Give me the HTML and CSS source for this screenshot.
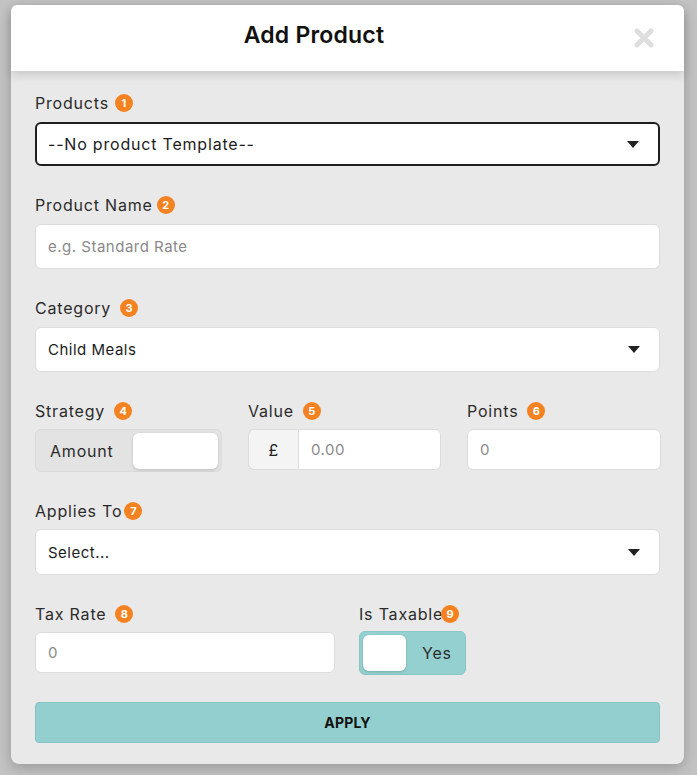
FILE: index.html
```html
<!DOCTYPE html>
<html lang="en">
<head>
    <meta charset="UTF-8">
    <title>Add Product</title>
    <link rel="stylesheet" href="styles.css">
</head>
<body>
    <div class="backdrop">
        <div class="modal">
            <!-- header -->
            <div class="modal-head">
                <h2 class="modal-title">Add Product</h2>
                <button class="close-btn" aria-label="Close">
                    <svg width="20" height="20" viewBox="0 0 20 20"><path d="M3 3 L17 17 M17 3 L3 17" stroke="#dedede" stroke-width="5" stroke-linecap="round"/></svg>
                </button>
            </div>

            <div class="modal-body">
                <div class="field">
                    <label class="label">Products <span class="badge">1</span></label>
                    <div class="select focused">
                        <span>--No product Template--</span>
                        <svg class="caret" width="12" height="7" viewBox="0 0 12 7"><path d="M0 0 H12 L6 7 Z" fill="#222"/></svg>
                    </div>
                </div>

                <div class="field">
                    <label class="label">Product Name <span class="badge tight">2</span></label>
                    <input class="input" type="text" placeholder="e.g. Standard Rate">
                </div>

                <div class="field">
                    <label class="label">Category <span class="badge wide">3</span></label>
                    <div class="select">
                        <span>Child Meals</span>
                        <svg class="caret" width="12" height="7" viewBox="0 0 12 7"><path d="M0 0 H12 L6 7 Z" fill="#222"/></svg>
                    </div>
                </div>

                <div class="field row-3 close-label">
                    <div>
                        <label class="label">Strategy <span class="badge wide">4</span></label>
                        <div class="switch strategy">
                            <span class="switch-text">Amount</span>
                            <span class="knob"></span>
                        </div>
                    </div>
                    <div>
                        <label class="label">Value <span class="badge wide">5</span></label>
                        <div class="input-group">
                            <span class="addon">£</span>
                            <input class="input small" type="text" placeholder="0.00">
                        </div>
                    </div>
                    <div>
                        <label class="label">Points <span class="badge wide">6</span></label>
                        <input class="input small" type="text" placeholder="0">
                    </div>
                </div>

                <div class="field close-label">
                    <label class="label">Applies To<span class="badge snug">7</span></label>
                    <div class="select tall">
                        <span>Select...</span>
                        <svg class="caret" width="12" height="7" viewBox="0 0 12 7"><path d="M0 0 H12 L6 7 Z" fill="#222"/></svg>
                    </div>
                </div>

                <div class="field row-tax close-label">
                    <div class="tax-col">
                        <label class="label">Tax Rate <span class="badge wide">8</span></label>
                        <input class="input small" type="text" placeholder="0">
                    </div>
                    <div class="taxable-col">
                        <label class="label">Is Taxable<span class="badge flush">9</span></label>
                        <div class="switch taxable">
                            <span class="knob"></span>
                            <span class="switch-text">Yes</span>
                        </div>
                    </div>
                </div>

                <button class="apply-btn">APPLY</button>
            </div>
        </div>
    </div>
</body>
</html>
```

FILE: styles.css
```css
html, body {
    margin: 0; padding: 0;
    background: #c3c3c3;
    font-family: 'Inter', 'Open Sans', sans-serif;
}
.backdrop {
    padding: 5px 13px 10px 11px;
    min-height: 775px; box-sizing: border-box;
}
.modal {
    width: 673px;
    background: #e9e9e9;
    border-radius: 8px;
    box-shadow: 0 4px 14px rgba(0,0,0,0.22);
}
/* ----------- header ----------- */
.modal-head {
    height: 66px;
    padding-right: 67px; box-sizing: border-box;
    background: #fff;
    border-radius: 6px 6px 0 0;
    box-shadow: 0 4px 10px rgba(0,0,0,0.14);
    display: flex; align-items: center; justify-content: center;
    position: relative;
}
.modal-title {
    margin: 0 0 6px 0;
    font-size: 23px; font-weight: 600; color: #111;
    letter-spacing: 0.2px;
}
.close-btn {
    position: absolute; right: 30px; top: 23px;
    background: none; border: 0; padding: 0; cursor: pointer;
}
/* ----------- body ----------- */
.modal-body {
    padding: 21px 24px 21px 24px;
}
.field { margin-bottom: 28px; }
.label {
    display: flex; align-items: center;
    height: 22px; margin-bottom: 8px;
    font-size: 16px; color: #2b2b2b;
    letter-spacing: 0.8px;
}
.close-label .label { margin-bottom: 7px; }
.badge {
    display: inline-flex; align-items: center; justify-content: center;
    width: 18px; height: 18px; border-radius: 50%;
    margin-left: 6px;
    background: #f58220; color: #fff;
    font-size: 11px; font-weight: 700; letter-spacing: 0;
}
.badge.tight { margin-left: 4px; }
.badge.wide { margin-left: 9px; }
.badge.snug { margin-left: 2px; }
.badge.flush { margin-left: -2px; }

.select, .input {
    box-sizing: border-box; width: 100%;
    height: 45px;
    background: #fff;
    border: 1px solid #dcdcdc;
    border-radius: 6px;
    font-family: inherit; font-size: 15px; color: #1c1c1c;
    letter-spacing: 0.5px;
}
.select {
    display: flex; align-items: center; justify-content: space-between;
    padding: 0 19px 0 12px;
}
.select.focused {
    height: 44px;
    border: 2px solid #1e1e1e;
    padding-left: 11px; font-size: 16px;
    letter-spacing: 0.8px;
}
.select.tall { height: 46px; }
.caret { flex: none; }
.input {
    padding: 0 12px; outline: none;
}
.input::placeholder { color: #8a8a8a; }
.input.small { height: 41px; }

/* three columns: strategy / value / points */
.row-3 {
    display: grid; grid-template-columns: 187px 193px 194px;
    column-gap: 26px;
}
.input-group { display: flex; }
.addon {
    flex: none;
    width: 50px; height: 41px; box-sizing: border-box;
    display: flex; align-items: center; justify-content: center;
    background: #f4f4f4;
    border: 1px solid #dcdcdc; border-right: 0;
    border-radius: 6px 0 0 6px;
    font-size: 16px; color: #222;
}
.input-group .input { border-radius: 0 6px 6px 0; }

/* switches */
.switch {
    box-sizing: border-box;
    display: flex; align-items: center;
    border-radius: 6px;
    padding: 3px;
}
.switch-text { font-size: 16px; color: #2b2b2b; letter-spacing: 0.8px; }
.knob {
    display: block; background: #fff; border-radius: 6px;
    box-shadow: 0 1px 3px rgba(0,0,0,0.18);
}
.strategy {
    height: 43px; width: 187px;
    background: #e3e3e3; border: 1px solid #dadada;
    justify-content: space-between;
    padding-left: 14px;
}
.strategy .knob { width: 85px; height: 36px; }
.taxable {
    height: 44px; width: 107px;
    background: #95d0d0; border: 1px solid #88c6c6;
}
.taxable-col .label { margin-bottom: 6px; }
.taxable .knob { width: 43px; height: 36px; }
.taxable .switch-text { margin-left: 16px; }

.row-tax {
    display: grid; grid-template-columns: 300px 1fr;
    column-gap: 24px;
    margin-bottom: 27px;
}

.apply-btn {
    display: block; width: 100%; height: 41px;
    background: #94cfcf;
    border: 1px solid #86c3c3; border-radius: 4px;
    font-family: inherit; font-size: 14px; font-weight: 700; color: #111;
    letter-spacing: 0.2px;
    cursor: pointer;
}
```
